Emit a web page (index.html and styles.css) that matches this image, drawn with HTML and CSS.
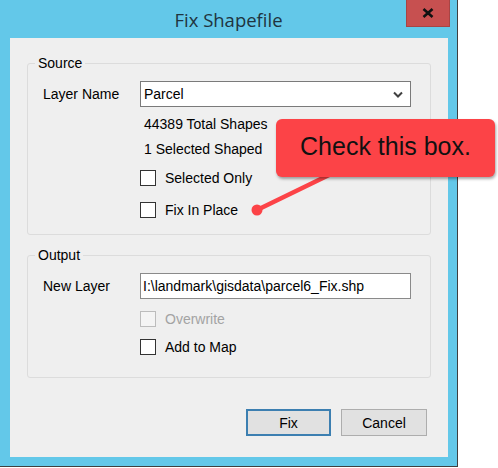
FILE: index.html
```html
<!DOCTYPE html>
<html lang="en">
  <head>
    <meta charset="UTF-8" />
    <meta name="viewport" content="width=device-width, initial-scale=1.0" />
    <title>Fix Shapefile</title>
    <link rel="stylesheet" href="styles.css">
  </head>
  <body>
    <div class="screen">
      <div class="window">
        <div class="titlebar">
          <div class="title">Fix Shapefile</div>
          <div class="close-btn">
            <svg width="12" height="10" viewBox="0 0 12 10">
              <path d="M1.5 1 L10.5 9 M10.5 1 L1.5 9" stroke="#111" stroke-width="2.6" fill="none" />
            </svg>
          </div>
        </div>

        <div class="client">
          <fieldset class="group">
            <legend>Source</legend>
            <div class="group-grid">
              <div class="field-label">Layer Name</div>
              <div class="combo">
                <span>Parcel</span>
                <svg width="10" height="7" viewBox="0 0 10 7">
                  <polyline points="1,1.5 5,5.5 9,1.5" stroke="#404040" stroke-width="2" fill="none" />
                </svg>
              </div>
              <div class="field-stack source-stack">
                <div class="info-line">44389 Total Shapes</div>
                <div class="info-line">1 Selected Shaped</div>
                <label class="check check-tall"><span class="box"></span>Selected Only</label>
                <label class="check check-tall"><span class="box"></span>Fix In Place</label>
              </div>
            </div>
          </fieldset>

          <fieldset class="group group-output">
            <legend>Output</legend>
            <div class="group-grid output-grid">
              <div class="field-label">New Layer</div>
              <div class="textbox">I:\landmark\gisdata\parcel6_Fix.shp</div>
              <div class="field-stack output-stack">
                <label class="check disabled"><span class="box"></span>Overwrite</label>
                <label class="check"><span class="box"></span>Add to Map</label>
              </div>
            </div>
          </fieldset>

          <div class="button-row">
            <button class="btn btn-default">Fix</button>
            <button class="btn btn-cancel">Cancel</button>
          </div>
        </div>
      </div>

      <!-- annotation -->
      <svg class="pointer" width="90" height="50" viewBox="0 0 90 50">
        <line x1="10" y1="40" x2="82" y2="5" stroke="#fc4347" stroke-width="4.5" stroke-linecap="round" />
        <circle cx="10" cy="40" r="5.5" fill="#fc4347" />
      </svg>
      <div class="callout">Check this box.</div>
    </div>
  </body>
</html>
```

FILE: styles.css
```css
body {
  margin: 0;
  background-color: #fff;
  font-family: "Liberation Sans", Arial, sans-serif;
  font-size: 14px;
  color: #000;
}

.screen {
  position: relative;
  width: 498px;
  height: 468px;
  overflow: hidden;
}

.window {
  width: 457px;
  padding-bottom: 9px;
  background-color: #63c8e9;
  border-right: 1px solid #3f3f3f;
  border-bottom: 1px solid #3f3f3f;
}

.titlebar {
  display: grid;
  height: 38px;
}

.title {
  grid-area: 1 / 1;
  justify-self: center;
  line-height: 38px;
  padding-top: 1px;
  font-family: "Open Sans", sans-serif;
  font-size: 18.5px;
  color: #1f3440;
}

.close-btn {
  grid-area: 1 / 1;
  justify-self: end;
  align-self: start;
  width: 44px;
  height: 27px;
  margin-right: 7px;
  box-sizing: border-box;
  background-color: #c75050;
  border: 1px solid #a84444;
  border-top: none;
  display: flex;
  align-items: center;
  justify-content: center;
}

.client {
  margin: 0 9px 0 10px;
  height: 419px;
  box-sizing: border-box;
  padding-top: 17px;
  background-color: #efefef;
  display: flex;
  flex-direction: column;
}

.group {
  margin: 0 17px 0 17px;
  padding: 0;
  min-width: 0;
  border: 1px solid #dcdcdc;
  border-radius: 3px;
}

.group legend {
  margin-left: 7px;
  padding: 0 3px;
  font-size: 14px;
  line-height: 16px;
}

.group-output {
  margin-top: 12px;
}

.group-grid {
  display: grid;
  grid-template-columns: 97px 271px;
  padding: 10px 0 8px 15px;
}

.output-grid {
  padding-bottom: 16px;
}

.field-label {
  align-self: center;
  line-height: 16px;
}

.combo,
.textbox {
  height: 26px;
  box-sizing: border-box;
  border: 1px solid #7a7a7a;
  background-color: #fff;
  display: flex;
  align-items: center;
}

.combo {
  justify-content: space-between;
  padding: 0 7px 0 3px;
}

.textbox {
  padding-left: 2px;
  border-color: #8a8a8a;
}

.field-stack {
  grid-column: 2;
  display: flex;
  flex-direction: column;
}

.source-stack {
  margin-top: 5px;
}

.output-stack {
  margin-top: 6px;
}

.info-line {
  height: 25px;
  line-height: 25px;
  padding-left: 4px;
}

.check {
  height: 28px;
  display: flex;
  align-items: center;
  gap: 9px;
}

.check-tall {
  height: 32px;
}

.check .box {
  width: 16px;
  height: 16px;
  box-sizing: border-box;
  border: 1px solid #333;
  background-color: #fff;
}

.check.disabled {
  color: #a3a3a3;
}

.check.disabled .box {
  border-color: #bcbcbc;
  background-color: #f4f4f4;
}

.button-row {
  margin-top: 31px;
  padding-right: 21px;
  display: flex;
  justify-content: flex-end;
  gap: 10px;
}

.btn {
  height: 27px;
  margin: 0;
  padding: 0;
  font-family: "Liberation Sans", Arial, sans-serif;
  font-size: 14px;
  color: #000;
  background-color: #e1e1e1;
  border: 1px solid #adadad;
}

.btn-default {
  width: 85px;
  border: 2px solid #3c7fb1;
}

.btn-cancel {
  width: 86px;
}

.pointer {
  position: absolute;
  left: 247px;
  top: 170px;
}

.callout {
  position: absolute;
  left: 276px;
  top: 119px;
  width: 219px;
  height: 58px;
  padding-bottom: 3px;
  box-sizing: border-box;
  background-color: #fc4347;
  border-radius: 6px;
  box-shadow: 1px 2px 3px rgba(0, 0, 0, 0.35);
  display: flex;
  align-items: center;
  justify-content: center;
  font-family: "Liberation Sans", Arial, sans-serif;
  font-size: 25px;
  color: #111;
}
```
